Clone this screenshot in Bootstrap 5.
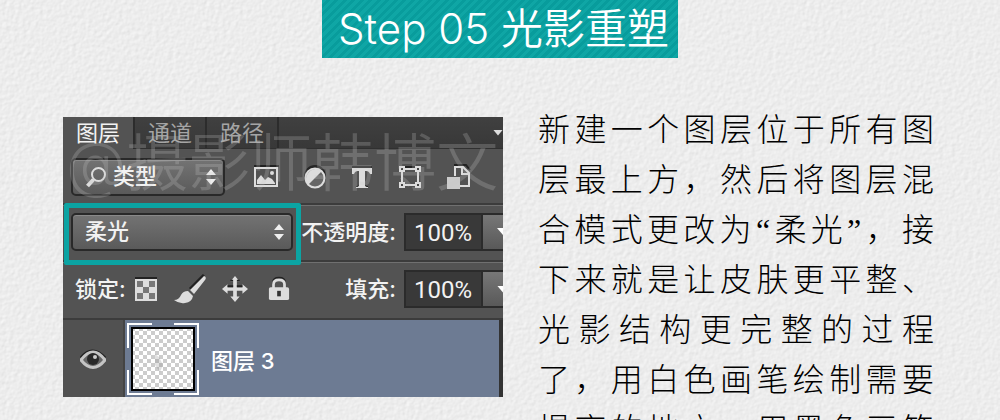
<!DOCTYPE html>
<html lang="zh-CN">
<head>
<meta charset="utf-8">
<meta name="viewport" content="width=device-width, initial-scale=1">
<title>Step 05 光影重塑</title>
<link href="https://cdn.jsdelivr.net/npm/bootstrap@5.3.0/dist/css/bootstrap.min.css" rel="stylesheet">
<style>
:root { --teal: #0ca4a3; --panel: #535353; --ink: #f2f2f2; }
body {
  background: #ececec url("data:image/svg+xml,%3Csvg xmlns='http://www.w3.org/2000/svg' width='200' height='200'%3E%3Cfilter id='p' x='0' y='0' width='100%25' height='100%25' color-interpolation-filters='sRGB'%3E%3CfeTurbulence type='fractalNoise' baseFrequency='.24' numOctaves='2' stitchTiles='stitch'/%3E%3CfeDiffuseLighting lighting-color='%23fff' surfaceScale='.3' diffuseConstant='1.12'%3E%3CfeDistantLight azimuth='45' elevation='56'/%3E%3C/feDiffuseLighting%3E%3C/filter%3E%3Crect width='200' height='200' filter='url(%23p)' opacity='.5'/%3E%3C/svg%3E");
  font-family: Inter, "Noto Sans CJK SC", sans-serif;
}
.step-title {
  background: repeating-linear-gradient(135deg, #0fa6a5 0 3px, #089c9c 3px 6px);
  font-size: 42px; line-height: 58px; font-weight: 350; padding: 0 9px 0 16px; white-space: pre;
}
.step-body { padding: 59px 66px 0 63px; gap: 35px; }
.ps-panel { flex: 10 1 0; height: 280px; background: var(--panel); color: var(--ink); font-size: 22px; line-height: 32px; font-weight: 500; }
.step-copy { flex: 9 1 0; color: #000; font-family: "Noto Sans CJK SC", sans-serif; font-weight: 300; font-size: 32px; line-height: 50px; margin-top: -15px; }
.copy-line { display: block; height: 50px; white-space: nowrap; text-align: justify; text-align-last: justify; }
.quote { font-family: "Liberation Serif", serif; line-height: 1; }
.ps-tabs { height: 32px; background: linear-gradient(#404040, #383838); border-bottom: 1px solid #303030; }
.ps-tab { border: 0; border-right: 2px solid #2c2c2c; background: none; color: #a5a5a5; padding: 0 13px 0 13px; height: 31px; }
.ps-tab.active { background: var(--panel); color: var(--ink); height: 32px; }
.tri { width: 10px; height: 6px; background: #ddd; clip-path: polygon(0 0, 100% 0, 50% 100%); }
.ps-row { border-bottom: 2px solid #3c3c3c; box-shadow: 0 1px #707070; padding-left: 8px; }
.row-filter { height: 56px; padding-top: 2px; }
.row-blend { height: 57px; padding-bottom: 2px; }
.row-lock { height: 58px; padding-bottom: 2px; }
.ps-select {
  appearance: none; width: 100%; height: 38px; border: 2px solid #292929; border-radius: 5px; color: var(--ink); font-weight: 500;
  background: linear-gradient(#737373, #5a5a5a); padding: 0 14px 2px 12px; line-height: 32px; box-shadow: inset 0 1px #8a8a8a;
}
.with-icon { padding-left: 40px; }
.select-arrows { right: 8px; top: 10px; pointer-events: none; }
.select-glass { left: 14px; top: 8px; pointer-events: none; }
.w-filter { width: 154px; }
.w-blend { width: 222px; }
.ps-num { width: 79px; height: 38px; background: #393939; border: 2px solid #2b2b2b; color: var(--ink); font-family: Roboto, sans-serif; font-size: 24px; font-weight: 400; padding: 2px 0 0 8px; border-radius: 0; }
.ps-drop { width: 20px; height: 38px; border: 2px solid #2b2b2b; border-width: 2px 0 2px 0; background: linear-gradient(#777, #595959); padding: 0 0 0 14px; overflow: hidden; }
.ps-drop .tri { width: 12px; height: 7px; background: #fff; }
.ps-ico { border: 0; background: none; padding: 0; line-height: 0; }
.blend-mark { left: 1px; top: 86px; width: 237px; height: 62px; border: 5px solid var(--teal); border-radius: 2px; pointer-events: none; }
.ps-eye { width: 62px; border-right: 2px solid #444; background: #515151; }
.ps-layer { background: #6d7b93; border-right: 4px solid #333; color: #fff; }
.thumb-frame { width: 72px; height: 72px; margin-left: 2px; }
.watermark { left: 3px; top: 7px; font-size: 62px; line-height: 80px; font-weight: 350; color: rgba(200,200,200,.24); pointer-events: none; white-space: nowrap; }
</style>
</head>
<body>
<main class="vh-100 overflow-hidden">
  <header class="d-flex justify-content-center"><h1 class="step-title text-white m-0">Step 05 光影重塑</h1></header>
  <div class="step-body d-flex align-items-start">
    <section class="ps-panel position-relative overflow-hidden d-flex flex-column" aria-label="图层面板">
      <div class="ps-tabs d-flex align-items-start flex-shrink-0">
        <button class="ps-tab active" type="button">图层</button>
        <button class="ps-tab" type="button">通道</button>
        <button class="ps-tab" type="button">路径</button>
        <span class="tri ms-auto align-self-center"></span>
      </div>
      <div class="ps-row row-filter d-flex align-items-center flex-shrink-0">
        <div class="w-filter position-relative flex-shrink-0">
          <select class="ps-select with-icon" aria-label="筛选"><option>类型</option></select>
          <svg class="select-glass position-absolute" width="22" height="22" fill="none" stroke="#ddd"><circle cx="13.500" cy="8.500" r="6.500" stroke-width="2"/><path d="M8.500 13.500 2.500 20" stroke-width="4"/></svg>
          <svg class="select-arrows position-absolute" width="12" height="18" fill="#eee"><path d="M1 7 6 1l5 6zM1 11h10l-5 6z"/></svg>
        </div>
        <div class="d-flex align-items-center ms-4 ps-1">
          <button class="ps-ico me-4" type="button" aria-label="像素图层"><svg width="26" height="26"><path d="M1 2h25" stroke="#222" stroke-width="2"/><path d="M2 4h22v18H2z" fill="none" stroke="#ddd" stroke-width="2"/><path d="M4 20v-4l4-5 4 5 3-3 4 2 3 4v1z" fill="#ddd"/><circle cx="19" cy="9" r="2" fill="#ddd"/></svg></button>
          <button class="ps-ico me-4" type="button" aria-label="调整图层"><svg width="24" height="26"><circle cx="12" cy="12" r="11" fill="#252525"/><circle cx="12" cy="14" r="9.500" fill="#666" stroke="#ddd" stroke-width="2"/><path d="M5 21A10 10 0 0 1 19 7z" fill="#ddd"/></svg></button>
          <button class="ps-ico me-4" type="button" aria-label="文字图层"><svg width="22" height="26"><path d="M1 2h20v6h-2q-1-3-4-3h-1v15q0 2 3 2v2H5v-2q3 0 3-2V5H7Q4 5 3 8H1z" fill="#222"/><path d="M1 4h20v6h-2q-1-3-4-3h-1v14q0 2 3 2v1H5v-1q3 0 3-2V7H7Q4 7 3 10H1z" fill="#ddd"/></svg></button>
          <button class="ps-ico me-4" type="button" aria-label="形状图层"><svg width="26" height="26" fill="none"><path d="M4 3h18" stroke="#222" stroke-width="2"/><g stroke="#ddd" stroke-width="2"><path d="M7 5h11M7 21h11M5 7v12M21 7v12"/><path d="M3 3h4v4H3zM19 3h4v4h-4zM3 19h4v4H3zM19 19h4v4h-4z" fill="#444"/></g></svg></button>
          <button class="ps-ico" type="button" aria-label="智能对象"><svg width="24" height="26"><path d="M8 2V1h11l4 5" stroke="#222" stroke-width="2" fill="none"/><path d="M8 12V3h8l6 6v13H13M15 3v7h7" fill="none" stroke="#ddd" stroke-width="2"/><path d="M0 13h13v12H0z" fill="#ccc"/></svg></button>
        </div>
      </div>
      <div class="ps-row row-blend d-flex align-items-center flex-shrink-0">
        <div class="w-blend position-relative flex-shrink-0">
          <select class="ps-select" aria-label="混合模式"><option>柔光</option></select>
          <svg class="select-arrows position-absolute" width="12" height="18" fill="#eee"><path d="M1 7 6 1l5 6zM1 11h10l-5 6z"/></svg>
        </div>
        <div class="d-flex align-items-center ms-auto flex-shrink-0">
          <label class="me-2" for="opacity">不透明度:</label>
          <input class="ps-num" id="opacity" value="100%">
          <button class="ps-drop" type="button" aria-label="不透明度选项"><span class="tri d-block"></span></button>
        </div>
      </div>
      <div class="ps-row row-lock d-flex align-items-center flex-shrink-0">
        <span class="ms-1">锁定:</span>
        <div class="d-flex align-items-center gap-3 ms-2">
          <button class="ps-ico" type="button" aria-label="锁定透明像素"><svg width="24" height="26"><path d="M1 2h22" stroke="#222" stroke-width="2"/><path d="M1 3h22v22H1z" fill="#ddd"/><path d="M3 5h6v6H3zM15 5h6v6h-6zM9 11h6v6H9zM3 17h6v6H3zM15 17h6v6h-6z" fill="#777"/></svg></button>
          <button class="ps-ico" type="button" aria-label="锁定图像像素"><svg width="32" height="30"><path d="M30 1 16 15" stroke="#222" stroke-width="3"/><path d="M30 2q3 1 1 4L20 20l-4-4zM14 17l5 5q-1 6-8 7-6 1-11-3 5 0 7-5 2-4 7-4z" fill="#ddd"/></svg></button>
          <button class="ps-ico" type="button" aria-label="锁定位置"><svg width="26" height="28" viewBox="0 0 28 28"><path d="m14 0 5 6h-3v6h6V9l6 5-6 5v-3h-6v6h3l-5 6-5-6h3v-6H6v3l-6-5 6-5v3h6V6H9z" fill="#ddd"/><path d="M9 5h3M16 5h3M6 11h6M16 11h6" stroke="#222" stroke-width="2"/></svg></button>
          <button class="ps-ico ms-1" type="button" aria-label="锁定全部"><svg width="22" height="28" viewBox="0 0 24 28"><path d="M6 12V7q0-5 6-5t6 5" fill="none" stroke="#222" stroke-width="3"/><path d="M6 14V9q0-5 6-5t6 5v5" fill="none" stroke="#ddd" stroke-width="3"/><rect x="1" y="12" width="22" height="14" rx="2" fill="#ddd"/><path d="M12 16v6" stroke="#333" stroke-width="4"/></svg></button>
        </div>
        <div class="d-flex align-items-center ms-auto flex-shrink-0">
          <label class="me-2" for="fill">填充:</label>
          <input class="ps-num" id="fill" value="100%">
          <button class="ps-drop" type="button" aria-label="填充选项"><span class="tri d-block"></span></button>
        </div>
      </div>
      <div class="d-flex flex-grow-1">
        <button class="ps-ico ps-eye flex-shrink-0" type="button" aria-label="显示图层"><svg width="26" height="20"><path d="M1 9Q12-5 25 9" fill="none" stroke="#222" stroke-width="3"/><path d="M1 11Q13-5 25 11 13 26 1 11z" fill="#666" stroke="#c4c4c4" stroke-width="3"/><circle cx="13" cy="10" r="6" fill="#292929"/><circle cx="15" cy="8" r="2" fill="#ccc"/></svg></button>
        <div class="ps-layer d-flex align-items-center flex-grow-1">
          <svg class="thumb-frame" viewBox="0 0 72 72" aria-label="图层缩览图"><defs><pattern id="chk" width="8" height="8" patternUnits="userSpaceOnUse"><path d="M0 0h8v8H0z" fill="#fff"/><path d="M0 0h4v4H0zM4 4h4v4H4z" fill="#ccc"/></pattern></defs><rect x="5" y="5" width="62" height="62" fill="url(#chk)" stroke="#000" stroke-width="2"/><path d="m28 31 4 3 4 8-3 7-5-7z" fill="#777" opacity=".22"/><path d="M1 25V1h24M47 1h24v24M1 47v24h24M47 71h24V47" fill="none" stroke="#fff" stroke-width="2"/></svg>
          <span class="ms-2 ps-1 pt-1">图层 3</span>
        </div>
      </div>
      <div class="blend-mark position-absolute"></div>
      <div class="watermark position-absolute">@摄影师韩博文</div>
    </section>
    <p class="step-copy mb-0"><span class="copy-line">新建一个图层位于所有图</span><span class="copy-line">层最上方，然后将图层混</span><span class="copy-line">合模式更改为<span class="quote">“</span>柔光<span class="quote">”</span>，接</span><span class="copy-line">下来就是让皮肤更平整、</span><span class="copy-line">光影结构更完整的过程</span><span class="copy-line">了，用白色画笔绘制需要</span><span class="copy-line">提亮的地方，用黑色画笔</span></p>
  </div>
</main>
<script src="https://cdn.jsdelivr.net/npm/bootstrap@5.3.0/dist/js/bootstrap.bundle.min.js"></script>
</body>
</html>
